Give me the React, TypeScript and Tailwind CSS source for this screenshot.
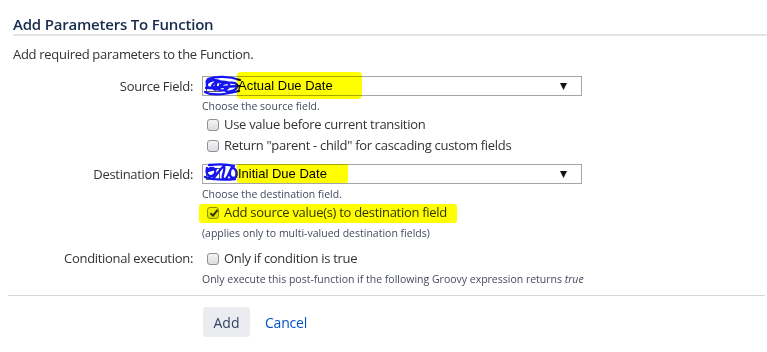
import type { ReactNode } from "react";

const FONT = { fontFamily: '"Open Sans", "Noto Sans", Arial, sans-serif' };

function Checkbox({ checked = false }: { checked?: boolean }) {
  return (
    <span className="relative inline-block w-[12px] h-[12px] shrink-0 rounded-[3px] border border-[#8f8f9d] bg-gradient-to-b from-[#f4f4f4] to-[#dcdcdc]">
      {checked && (
        <svg className="absolute left-[1px] top-[0px]" width="10" height="10" viewBox="0 0 10 10">
          <path d="M1.5 5.2 L4 7.6 L8.6 1.8" fill="none" stroke="#333" strokeWidth="2" />
        </svg>
      )}
    </span>
  );
}

function Scribble({ variant }: { variant: 0 | 1 }) {
  const d =
    variant === 0
      ? "M4 10 C2 4 10 3 13 8 C15 13 6 17 4 12 C2 6 17 4 19 9 C21 15 10 18 9 13 C8 7 24 6 26 10 C28 16 15 19 16 14 C17 8 33 7 34 11 C35 17 22 20 22 15 M2 18 C9 22 20 21 36 17 M5 5 C13 2 26 2 37 6 M3 14 L36 12"
      : "M4 6 C2 14 9 17 12 11 C14 5 6 4 5 9 L13 7 M10 17 C14 12 19 5 21 4 C23 9 17 16 21 17 C25 18 27 7 29 5 C25 12 27 18 33 15 C35 9 31 4 28 7 M2 15 C10 18 21 18 32 17 M6 3 C15 2 24 2 31 4";
  return (
    <svg className="absolute left-[0px] top-[-3px]" width="39" height="24" viewBox="0 0 39 24">
      <path d={d} fill="none" stroke="#1414f0" strokeWidth="2.3" strokeLinecap="round" />
    </svg>
  );
}

function SelectBox({ value, variant }: { value: string; variant: 0 | 1 }) {
  return (
    <div className="relative flex items-center w-[380px] h-[20px] border border-[#a6a6a6] bg-white">
      <span className="ml-[3px] w-[14px] h-[12px] border border-[#5a5a5a] bg-white" />
      <Scribble variant={variant} />
      <span
        className="ml-[18px] text-[13px] leading-[18px] text-black"
        style={{ fontFamily: '"Liberation Sans", Arial, sans-serif' }}
      >
        {value}
      </span>
      <svg className="absolute right-[14px] top-[6px]" width="7" height="7" viewBox="0 0 7 7">
        <path d="M0 0 L7 0 L3.5 7 Z" fill="#111" />
      </svg>
    </div>
  );
}

function Row({ label, children }: { label: string; children: ReactNode }) {
  return (
    <div className="flex">
      <div className="w-[193px] shrink-0 text-right text-[13px] leading-[21px] tracking-[-0.3px] text-[#333]">{label}</div>
      <div className="ml-[9px] flex flex-col">{children}</div>
    </div>
  );
}

function CheckLine({ label, checked }: { label: string; checked?: boolean }) {
  return (
    <label className="flex items-center h-[21px] pl-[5px] text-[13px] tracking-[-0.3px] text-[#333]">
      <Checkbox checked={checked} />
      <span className="ml-[5px]">{label}</span>
    </label>
  );
}

function Help({ children }: { children: ReactNode }) {
  return <div className="mt-[2px] text-[10.5px] leading-[16px] text-[#444a5e]">{children}</div>;
}

export default function App() {
  return (
    <div className="relative w-[767px] h-[352px] bg-white overflow-hidden" style={FONT}>
      <div className="pl-[13px] pt-[14px]">
        <h2 className="text-[15px] leading-[20px] font-semibold tracking-[-0.2px] text-[#172b4d]">
          Add Parameters To Function
        </h2>
        <div className="h-[2px] bg-[#e4e4e4]" />
        <p className="mt-[9px] text-[13px] leading-[18px] tracking-[-0.3px] text-[#333]">
          Add required parameters to the Function.
        </p>
      </div>

      <div className="mt-[13px] flex flex-col">
        <Row label="Source Field:">
          <SelectBox value="Actual Due Date" variant={0} />
          <Help>Choose the source field.</Help>
          <CheckLine label="Use value before current transition" />
          <CheckLine label={'Return "parent - child" for cascading custom fields'} />
        </Row>

        <div className="mt-[8px]">
          <Row label="Destination Field:">
            <SelectBox value="Initial Due Date" variant={1} />
            <Help>Choose the destination field.</Help>
            <CheckLine label="Add source value(s) to destination field" checked />
            <Help>(applies only to multi-valued destination fields)</Help>
          </Row>
        </div>

        <div className="mt-[7px]">
          <Row label="Conditional execution:">
            <CheckLine label="Only if condition is true" />
            <Help>
              Only execute this post-function if the following Groovy expression returns <i>true</i>
            </Help>
          </Row>
        </div>
      </div>

      <div className="mt-[8px] ml-[8px] mr-[2px] h-[1px] bg-[#d6d6d6]" />

      <div className="mt-[11px] flex items-center pl-[203px]">
        <button className="h-[30px] w-[47px] rounded-[3px] bg-[#ebecf0] text-[14px] text-[#344563]">Add</button>
        <a className="ml-[15px] text-[14px] tracking-[-0.2px] text-[#0052cc]" href="#">
          Cancel
        </a>
      </div>

      {/* yellow marker highlights */}
      <div className="absolute left-[237px] top-[72px] w-[125px] h-[27px] rounded-[4px] bg-[#ffff00] mix-blend-multiply" />
      <div className="absolute left-[237px] top-[164px] w-[111px] h-[19px] rounded-[2px] bg-[#ffff00] mix-blend-multiply" />
      <div className="absolute left-[199px] top-[204px] w-[258px] h-[19px] rounded-[3px] bg-[#ffff00] mix-blend-multiply" />
    </div>
  );
}
